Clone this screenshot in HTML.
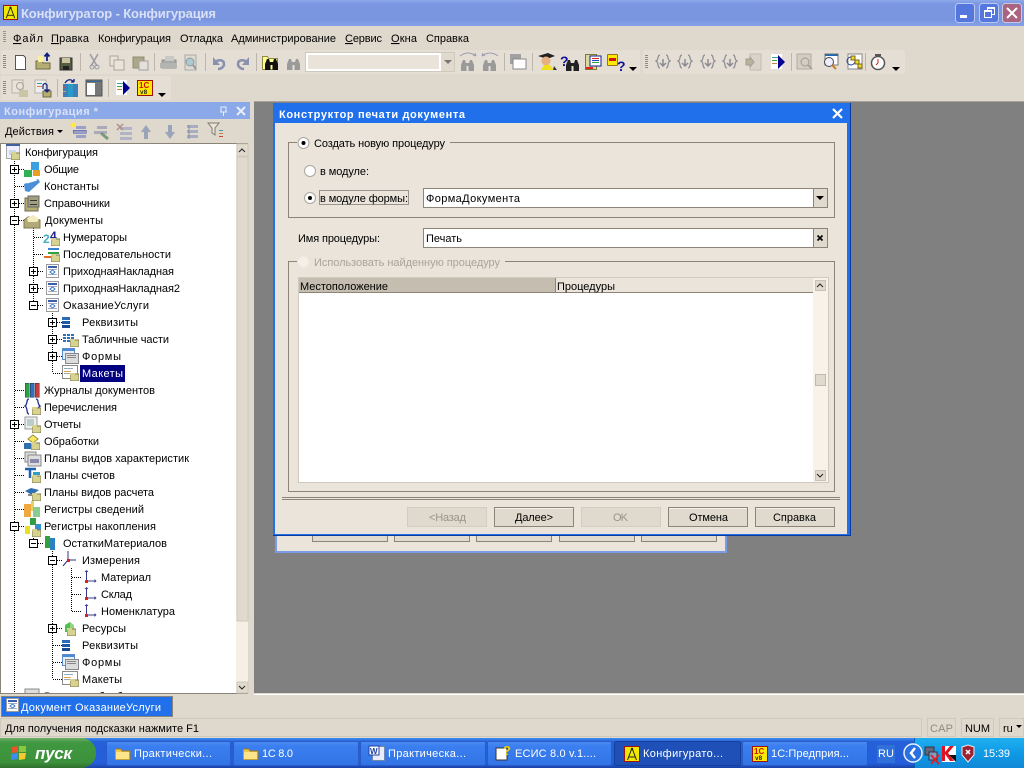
<!DOCTYPE html>
<html lang="ru"><head><meta charset="utf-8"><title>Конфигуратор</title>
<style>
html,body{margin:0;padding:0;background:#dfd8cd;overflow:hidden}
svg{display:block}
text{font:11px "Liberation Sans",sans-serif;fill:#000;shape-rendering:auto}
.w text,text.w{fill:#fff}
.g{fill:#aaa498}
.b{font-weight:bold}
rect,line,path.c{shape-rendering:crispEdges}
.d{stroke:#000;stroke-width:1;stroke-dasharray:1 1;fill:none}
</style></head><body>
<svg width="1024" height="768" viewBox="0 0 1024 768" xmlns="http://www.w3.org/2000/svg">
<defs>
<linearGradient id="tb" x1="0" y1="0" x2="0" y2="1"><stop offset="0" stop-color="#8da9ea"/><stop offset=".15" stop-color="#7c97e2"/><stop offset=".75" stop-color="#7a95e0"/><stop offset="1" stop-color="#84a2e8"/></linearGradient>
<linearGradient id="task" x1="0" y1="0" x2="0" y2="1"><stop offset="0" stop-color="#3f8cf0"/><stop offset=".12" stop-color="#2560d8"/><stop offset=".85" stop-color="#245edb"/><stop offset="1" stop-color="#1941a5"/></linearGradient>
<linearGradient id="start" x1="0" y1="0" x2="0" y2="1"><stop offset="0" stop-color="#6fae6b"/><stop offset=".15" stop-color="#3f983f"/><stop offset=".8" stop-color="#3c923c"/><stop offset="1" stop-color="#2e6f2e"/></linearGradient>
<linearGradient id="tbtn" x1="0" y1="0" x2="0" y2="1"><stop offset="0" stop-color="#4d8df2"/><stop offset=".2" stop-color="#3a7ef0"/><stop offset="1" stop-color="#3274e6"/></linearGradient>
<linearGradient id="tray" x1="0" y1="0" x2="0" y2="1"><stop offset="0" stop-color="#1fb0f0"/><stop offset=".5" stop-color="#0f9ae6"/><stop offset="1" stop-color="#1088d8"/></linearGradient>
<symbol id="fo" viewBox="0 0 9 8" width="9" height="8"><rect x="0" y="1" width="9" height="7" fill="#d8d290" stroke="#7f7a50"/><rect x="0" y="0" width="5" height="2" fill="#d8d290"/></symbol>
<symbol id="plus" viewBox="0 0 9 9" width="9" height="9"><rect x=".5" y=".5" width="8" height="8" fill="#fff" stroke="#000"/><rect x="2" y="4" width="5" height="1" fill="#000"/><rect x="4" y="2" width="1" height="5" fill="#000"/></symbol>
<symbol id="minus" viewBox="0 0 9 9" width="9" height="9"><rect x=".5" y=".5" width="8" height="8" fill="#fff" stroke="#000"/><rect x="2" y="4" width="5" height="1" fill="#000"/></symbol>
<symbol id="docic" viewBox="0 0 13 14" width="13" height="14"><rect x=".5" y=".5" width="12" height="13" fill="#fff" stroke="#9a9a9a"/><rect x="2" y="2" width="9" height="2" fill="#3a5fa8"/><rect x="2" y="5" width="9" height="1" fill="#aab"/><rect x="2" y="10" width="9" height="1" fill="#aab"/><path d="M6.500 6l2.500 2-2.500 2-2.500-2z" fill="#fff" stroke="#3a7ac8"/></symbol>
<symbol id="rek" viewBox="0 0 9 11" width="9" height="11"><rect x="0" y="0" width="8" height="3" fill="#2a6ab8"/><rect x="0" y="4" width="8" height="3" fill="#1f5aa8"/><rect x="0" y="8" width="8" height="3" fill="#174a90"/></symbol>
<symbol id="form" viewBox="0 0 17 16" width="17" height="16"><rect x=".5" y=".5" width="12" height="11" fill="#e8eef8" stroke="#5a8ac8"/><rect x="1" y="1" width="11" height="2" fill="#4a8ad8"/><rect x="3.500" y="5.500" width="13" height="10" fill="#dcdcdc" stroke="#888"/><rect x="5" y="7" width="9" height="1" fill="#888"/><rect x="5" y="9" width="9" height="1" fill="#888"/></symbol>
<symbol id="maket" viewBox="0 0 17 16" width="17" height="16"><rect x=".5" y=".5" width="15" height="13" fill="#fff" stroke="#8a8a8a"/><rect x="2" y="3" width="9" height="1" fill="#9ab"/><rect x="2" y="6" width="7" height="1" fill="#e0a050"/><rect x="2" y="8" width="7" height="1" fill="#9ab"/><use href="#fo" x="8" y="8"/></symbol>
<symbol id="axis" viewBox="0 0 14 14" width="14" height="14"><path d="M3.500 1v10M3.500 11h9" stroke="#3a3a90" fill="none"/><rect x="2" y="10" width="3" height="3" fill="#e02020"/><path d="M3.500 0l-2 2h4zM13.500 11l-2-2v4z" fill="#3a3a90"/></symbol>
<symbol id="bino" viewBox="0 0 13 12" width="13" height="12"><path d="M0 12V6l2-5h2l1.500 5v6zM13 12V6l-2-5H9L7.500 6v6z" fill="currentColor"/><rect x="5" y="4" width="3" height="3" fill="currentColor"/></symbol>
<symbol id="logo1c" viewBox="0 0 16 16" width="16" height="16"><rect x=".5" y=".5" width="15" height="15" fill="#ffe800" stroke="#a01010"/><text x="2" y="8" style="font:bold 8px 'Liberation Sans',sans-serif;fill:#d01010">1C</text><text x="3" y="14" style="font:bold 6px 'Liberation Mono',monospace;fill:#222">v8</text></symbol>
<symbol id="cfg" viewBox="0 0 16 16" width="16" height="16"><rect x=".5" y=".5" width="15" height="15" fill="#f0e800" stroke="#a01010"/><path d="M8 2L3.500 14M8 2l4.500 12M5 11h6" stroke="#222" fill="none"/><circle cx="8" cy="3" r="1.200" fill="#222"/></symbol>
<symbol id="yf" viewBox="0 0 16 13" width="16" height="13"><path d="M0 2h6l1 2h8v9H0z" fill="#f0c850" stroke="#a07820"/><rect x="1" y="5" width="13" height="7" fill="#fce48a"/></symbol>
<symbol id="brace" viewBox="0 0 16 16" width="16" height="16"><path d="M5 1C2 1 4 6 1 7c3 1 1 7 4 7M11 1c3 0 1 5 4 6-3 1-1 7-4 7" fill="none" stroke="#8a8a92" stroke-width="1.200"/><path d="M8 5v6M5 9l3 3 3-3" fill="none" stroke="#8a8a92" stroke-width="1.500"/></symbol>
<symbol id="btn" viewBox="0 0 80 20" width="80" height="20"><rect x=".5" y=".5" width="79" height="19" fill="#e0dace" stroke="#8c8476"/><rect x="1" y="1" width="78" height="1" fill="#f4f0ea"/></symbol>
<symbol id="btnd" viewBox="0 0 80 20" width="80" height="20"><rect x=".5" y=".5" width="79" height="19" fill="#dfd9ce" stroke="#d3cdc1"/></symbol>
</defs>

<!-- app chrome -->
<rect width="1024" height="768" fill="#dfd8cd"/>
<rect width="1024" height="26" fill="url(#tb)"/>
<use href="#cfg" x="3" y="5" width="15" height="15"/>
<text x="21" y="18" class="b" style="font-size:13px;fill:#d9e0f5" textLength="195">Конфигуратор - Конфигурация</text>
<g>
<rect x="955.500" y="3.500" width="19" height="19" rx="3" fill="#5577dd" stroke="#b8c8f0"/><rect x="960" y="15" width="7" height="3" fill="#fff"/>
<rect x="979.500" y="3.500" width="19" height="19" rx="3" fill="#5577dd" stroke="#b8c8f0"/><path class="c" d="M984.500 10.500h7v7h-7zM987.500 10V7.500h7v7H992" fill="none" stroke="#fff"/><rect x="987" y="7" width="8" height="2" fill="#fff"/><rect x="984" y="10" width="8" height="2" fill="#fff"/>
<rect x="1002.500" y="3.500" width="19" height="19" rx="3" fill="#a86480" stroke="#c8c8e0"/><path d="M1007 8l10 10M1017 8l-10 10" stroke="#fff" stroke-width="2"/>
</g>

<!-- menu -->
<g fill="#9a958a"><rect x="3" y="31" width="3" height="1"/><rect x="3" y="33" width="3" height="1"/><rect x="3" y="35" width="3" height="1"/><rect x="3" y="37" width="3" height="1"/><rect x="3" y="39" width="3" height="1"/><rect x="3" y="41" width="3" height="1"/></g>
<text x="13" y="42" textLength="30"><tspan text-decoration="underline">Ф</tspan>айл</text>
<text x="51" y="42" textLength="38"><tspan text-decoration="underline">П</tspan>равка</text>
<text x="98" y="42" textLength="73">Конфигурация</text>
<text x="180" y="42" textLength="43">Отладка</text>
<text x="231" y="42" textLength="105">Администрирование</text>
<text x="345" y="42" textLength="37"><tspan text-decoration="underline">С</tspan>ервис</text>
<text x="391" y="42" textLength="26"><tspan text-decoration="underline">О</tspan>кна</text>
<text x="426" y="42" textLength="43">Справка</text>

<!-- toolbar bands -->
<rect x="1" y="50" width="639" height="24" rx="2" fill="#e4ded4"/>
<rect x="643" y="50" width="262" height="24" rx="2" fill="#e4ded4"/>
<rect x="1" y="76" width="170" height="24" rx="2" fill="#e4ded4"/>
<g fill="#8f8a80"><rect x="3" y="55" width="3" height="1"/><rect x="3" y="57" width="3" height="1"/><rect x="3" y="59" width="3" height="1"/><rect x="3" y="61" width="3" height="1"/><rect x="3" y="63" width="3" height="1"/><rect x="3" y="65" width="3" height="1"/><rect x="3" y="67" width="3" height="1"/>
<rect x="3" y="81" width="3" height="1"/><rect x="3" y="83" width="3" height="1"/><rect x="3" y="85" width="3" height="1"/><rect x="3" y="87" width="3" height="1"/><rect x="3" y="89" width="3" height="1"/><rect x="3" y="91" width="3" height="1"/><rect x="3" y="93" width="3" height="1"/>
<rect x="645" y="55" width="3" height="1"/><rect x="645" y="57" width="3" height="1"/><rect x="645" y="59" width="3" height="1"/><rect x="645" y="61" width="3" height="1"/><rect x="645" y="63" width="3" height="1"/><rect x="645" y="65" width="3" height="1"/><rect x="645" y="67" width="3" height="1"/></g>
<g fill="#bdb7ab"><rect x="80" y="53" width="1" height="18"/><rect x="154" y="53" width="1" height="18"/><rect x="205" y="53" width="1" height="18"/><rect x="256" y="53" width="1" height="18"/><rect x="504" y="53" width="1" height="18"/><rect x="532" y="53" width="1" height="18"/><rect x="791" y="53" width="1" height="18"/><rect x="865" y="53" width="1" height="18"/><rect x="57" y="79" width="1" height="18"/><rect x="108" y="79" width="1" height="18"/></g>

<!-- toolbar 1 icons -->
<path class="c" d="M15.500 55.500h8l2 2v12h-10z" fill="#fff" stroke="#555"/>
<path d="M36 61h6l1 2h7v6H36z" fill="#b5ad72" stroke="#6f6a40"/><path d="M38 56h5v6h-5z" fill="#f8f0a0"/><path d="M47 61v-7M44.500 56.500l2.500-3 2.500 3" stroke="#102080" stroke-width="1.800" fill="none"/>
<rect x="60" y="58" width="12" height="12" fill="#555b3f" stroke="#333"/><rect x="62" y="58" width="8" height="5" fill="#c8c4a0"/><rect x="63" y="66" width="6" height="4" fill="#222"/>
<path d="M90 54l7 12M98 54l-7 12" stroke="#9a9aa4" stroke-width="1.500"/><circle cx="92" cy="67" r="2" fill="none" stroke="#9a9aa4"/><circle cx="97" cy="67" r="2" fill="none" stroke="#9a9aa4"/>
<rect x="110" y="56" width="8" height="10" fill="#e8e4da" stroke="#aaa69c"/><rect x="114" y="60" width="10" height="10" fill="#e8e4da" stroke="#aaa69c"/>
<rect x="133" y="57" width="11" height="11" fill="#aaa888" stroke="#8f8d75"/><rect x="139" y="61" width="9" height="9" fill="#e4e0d8" stroke="#a0a0a0"/>
<rect x="162" y="60" width="14" height="8" fill="#a8a8a6" stroke="#909090"/><rect x="165" y="56" width="9" height="5" fill="#c8c8c4"/><rect x="160" y="63" width="16" height="5" fill="#b4b4b0"/>
<rect x="185" y="55" width="11" height="15" fill="#dfdbd2" stroke="#aaa"/><circle cx="190" cy="62" r="4" fill="#b0c8d0" stroke="#8f9ca0"/><path d="M193 65l3 4" stroke="#999" stroke-width="2"/>
<path d="M215 62c4-3 9-2 9 2 0 3-3 5-6 5" fill="none" stroke="#8a90b0" stroke-width="2.500"/><path d="M213 57v8h7z" fill="#8a90b0"/>
<path d="M247 62c-4-3-9-2-9 2 0 3 3 5 6 5" fill="none" stroke="#8a90b0" stroke-width="2.500"/><path d="M249 57v8h-7z" fill="#8a90b0"/>
<path class="c" d="M262.500 56.500h5l1 2h9v11h-15z" fill="#ffff90" stroke="#8f8a40"/><use href="#bino" x="265" y="58" style="color:#111"/>
<use href="#bino" x="287" y="58" style="color:#9a9a9a"/>
<rect x="305.500" y="52.500" width="149" height="19" fill="#e0dace" stroke="#d0cabd"/>
<rect x="306" y="53" width="135" height="18" fill="#fff"/><rect x="308" y="55" width="131" height="14" fill="#e9e3d9"/>
<path d="M444 60h8l-4 4z" fill="#777"/>
<use href="#bino" x="461" y="59" style="color:#9a9a9a"/><path d="M460 56q8-6 16 0M476 56l-3-1M476 56l-1-3" fill="none" stroke="#9a9ab0"/>
<use href="#bino" x="483" y="59" style="color:#9a9a9a"/><path d="M482 56q8-6 16 0M482 56l3-1M482 56l1-3" fill="none" stroke="#9a9ab0"/>
<rect x="510" y="54" width="11" height="10" fill="#a0a0a0"/><rect x="513" y="59" width="13" height="10" fill="#fff" stroke="#8a8a8a"/>
<path d="M538 56l10-3 7 3-8 3z" fill="#222"/><circle cx="546" cy="61" r="4.500" fill="#e8b080"/><path d="M541 70l3-5h6l4 5z" fill="#eee020"/><path d="M553 70l1-4 3 4z" fill="#333"/>
<text x="560" y="66" class="b" style="font-size:14px;fill:#10109a">?</text><use href="#bino" x="566" y="59" style="color:#222"/>
<rect x="585.500" y="54.500" width="11" height="15" fill="#d8d8a0" stroke="#7f7a30"/><rect x="590" y="56" width="11" height="10" fill="#fff" stroke="#102090"/><rect x="592" y="58" width="7" height="1" fill="#e02020"/><rect x="592" y="60" width="7" height="1" fill="#2040c0"/><rect x="592" y="62" width="7" height="1" fill="#20a040"/><rect x="586" y="67" width="7" height="2" fill="#e02020"/>
<rect x="607.500" y="54.500" width="10" height="11" rx="1" fill="#ffe800" stroke="#a07020"/><rect x="609" y="58" width="7" height="3" fill="#d01010"/><text x="617" y="71" class="b" style="font-size:14px;fill:#10109a">?</text>
<path d="M629 67h8l-4 4z" fill="#000"/>
<use href="#brace" x="655" y="54"/><use href="#brace" x="677" y="54"/><use href="#brace" x="700" y="54"/><use href="#brace" x="722" y="54"/>
<rect x="750" y="54" width="11" height="16" fill="#d8d4ca" stroke="#c2beb4"/><path d="M746 59h4v-2l4 5-4 5v-2h-4z" fill="#b8b49c" stroke="#a0a090"/>
<rect x="771" y="54" width="11" height="15" fill="#fff"/><rect x="772" y="57" width="6" height="1" fill="#40a0a0"/><rect x="772" y="60" width="5" height="1" fill="#40a040"/><rect x="772" y="63" width="5" height="1" fill="#d08040"/><path d="M778 55l7 7-7 7z" fill="#000090"/>
<rect x="797" y="54" width="14" height="15" fill="#d2cec4" stroke="#b0aca2"/><circle cx="805" cy="62" r="4" fill="none" stroke="#a09c92"/><path d="M808 65l4 4" stroke="#a09c92" stroke-width="1.500"/>
<rect x="825" y="54" width="13" height="11" fill="#fff" stroke="#777"/><rect x="825" y="54" width="13" height="2" fill="#2a6aa8"/><circle cx="829" cy="62" r="4.500" fill="#eef" stroke="#444"/><path d="M832 65l4 4" stroke="#c88030" stroke-width="2"/>
<rect x="848" y="54" width="14" height="15" fill="#fff" stroke="#888"/><circle cx="851" cy="61" r="4" fill="none" stroke="#2040a0"/><rect x="851" y="56" width="4" height="4" fill="#e8e020" stroke="#806020"/><rect x="855" y="60" width="4" height="4" fill="#e8e020" stroke="#806020"/><rect x="858" y="64" width="4" height="4" fill="#e8e020" stroke="#806020"/>
<circle cx="878" cy="63" r="6.500" fill="#fff" stroke="#555" stroke-width="1.500"/><rect x="875" y="54" width="6" height="2" fill="#555"/><path d="M878 63v-4M878 63l-2 2" stroke="#d02020"/>
<path d="M892 67h8l-4 4z" fill="#000"/>

<!-- toolbar 3 icons -->
<rect x="12" y="80" width="11" height="13" fill="#e8e4da" stroke="#b8b4aa"/><rect x="19" y="90" width="9" height="7" fill="#c9c5a6"/><circle cx="20" cy="86" r="3.500" fill="none" stroke="#a8a498"/>
<rect x="35" y="80" width="11" height="13" fill="#eee" stroke="#b8b4aa"/><rect x="37" y="83" width="5" height="1" fill="#40a0a0"/><rect x="37" y="86" width="5" height="1" fill="#e08040"/><path d="M43 91h8v6h-8z" fill="#b5ad72" stroke="#6f6a40"/><path d="M43 89v-4q2-3 4 0v5M45 90h4l-2 2z" fill="none" stroke="#102080" stroke-width="1.200"/>
<rect x="63" y="84" width="15" height="13" fill="#3f7fb8"/><rect x="68" y="84" width="5" height="13" fill="#2a9ac8"/><path d="M65 83q4-6 9-1M74 82l-3 0M74 82l0-3" fill="none" stroke="#102080" stroke-width="1.300"/><rect x="63" y="87" width="3" height="1" fill="#e04040"/><rect x="63" y="91" width="3" height="1" fill="#e0a040"/>
<rect x="86" y="80" width="16" height="16" fill="#777" stroke="#555"/><rect x="87" y="83" width="8" height="12" fill="#fff"/><rect x="87" y="81" width="14" height="1" fill="#2a6aa8"/>
<rect x="116" y="80" width="11" height="15" fill="#fff"/><rect x="117" y="83" width="6" height="1" fill="#40a0a0"/><rect x="117" y="86" width="5" height="1" fill="#40a040"/><rect x="117" y="89" width="5" height="1" fill="#d08040"/><path d="M123 81l7 7-7 7z" fill="#000090"/>
<use href="#logo1c" x="137" y="80"/>
<path d="M158 93h8l-4 4z" fill="#000"/>

<!-- left panel -->
<rect x="0" y="102" width="250" height="17" fill="#8ba8e8"/>
<text x="4" y="115" class="b" style="fill:#d8e2f8" textLength="94">Конфигурация *</text>
<path class="c" d="M221 107h5v5h-5zM223.500 112v4M220 112h7" fill="none" stroke="#e8eefc"/>
<path d="M237 107l8 8M245 107l-8 8" stroke="#e8eefc" stroke-width="2"/>
<text x="5" y="135" textLength="49">Действия</text><path d="M57 130h6l-3 3z" fill="#000"/>
<g>
<rect x="76" y="126" width="10" height="3" fill="#9aa0c8"/><rect x="73" y="130" width="13" height="3" fill="#9aa0c8" stroke="#4050a0" stroke-width=".5"/><rect x="76" y="135" width="10" height="3" fill="#9aa0c8"/><circle cx="73" cy="125" r="2.500" fill="#ffe840"/>
<rect x="97" y="126" width="10" height="3" fill="#aab"/><rect x="94" y="131" width="13" height="3" fill="#aab"/><path d="M101 133l7 6" stroke="#7a9a78" stroke-width="3"/>
<rect x="120" y="127" width="12" height="3" fill="#b0b4c6"/><rect x="120" y="132" width="12" height="3" fill="#b0b4c6"/><rect x="120" y="137" width="12" height="3" fill="#b0b4c6"/><path d="M117 124l6 6M123 124l-6 6" stroke="#b09088" stroke-width="1.500"/>
<path d="M141 132l5-7 5 7h-3v7h-4v-7z" fill="#9aa4b8"/>
<path d="M165 132l5 7 5-7h-3v-7h-4v7z" fill="#9aa4b8"/>
<rect x="187" y="125" width="11" height="3" fill="#a8acc0"/><rect x="187" y="130" width="11" height="3" fill="#a8acc0"/><rect x="187" y="135" width="11" height="3" fill="#a8acc0"/><path d="M189 125v14" stroke="#8a8ea0"/>
<path d="M208 123h11l-4 5v7l-3-2v-5z" fill="#e8e4da" stroke="#807a70"/><rect x="219" y="130" width="4" height="1" fill="#40a0a0"/><rect x="219" y="133" width="4" height="1" fill="#d08040"/><rect x="219" y="136" width="4" height="1" fill="#d04040"/>
</g>

<!-- tree -->
<rect x="0" y="143" width="248" height="551" fill="#8a8478"/>
<rect x="1" y="144" width="235" height="549" fill="#fff"/>
<rect x="236" y="144" width="12" height="549" fill="#f5efe5"/>
<rect x="237" y="144" width="11" height="12" fill="#e0dace" stroke="#cfc9bc"/><path d="M239 152l3-3 3 3" fill="none" stroke="#222"/>
<rect x="237" y="157" width="11" height="464" fill="#e0dace" stroke="#cfc9bc"/>
<rect x="237" y="682" width="11" height="11" fill="#e0dace" stroke="#cfc9bc"/><path d="M239 686l3 3 3-3" fill="none" stroke="#222"/>

<svg x="1" y="144" width="235" height="549" viewBox="1 144 235 549">
<line class="d" x1="14.500" y1="157" x2="14.500" y2="693"/>
<line class="d" x1="33.500" y1="228" x2="33.500" y2="305"/>
<line class="d" x1="52.500" y1="313" x2="52.500" y2="373"/>
<line class="d" x1="33.500" y1="534" x2="33.500" y2="543"/>
<line class="d" x1="52.500" y1="551" x2="52.500" y2="679"/>
<line class="d" x1="71.500" y1="568" x2="71.500" y2="611"/>
<path class="d c" d="M19 169.500h5M15 186.500h9M19 203.500h5M19 220.500h5M34 237.500h9M34 254.500h9M38 271.500h6M38 288.500h6M38 305.500h6M57 322.500h5M57 339.500h5M57 356.500h5M53 373.500h9M15 390.500h9M15 407.500h9M19 424.500h5M15 441.500h9M15 458.500h9M15 475.500h9M15 492.500h9M15 509.500h9M19 526.500h5M38 543.500h6M57 560.500h5M72 577.500h9M72 594.500h9M72 611.500h9M57 628.500h5M53 645.500h9M53 662.500h9M53 679.500h9M15 696.500h9"/>
<use href="#plus" x="10" y="165"/><use href="#plus" x="10" y="199"/><use href="#minus" x="10" y="216"/>
<use href="#plus" x="29" y="267"/><use href="#plus" x="29" y="284"/><use href="#minus" x="29" y="301"/>
<use href="#plus" x="48" y="318"/><use href="#plus" x="48" y="335"/><use href="#plus" x="48" y="352"/>
<use href="#plus" x="10" y="420"/><use href="#minus" x="10" y="522"/><use href="#minus" x="29" y="539"/><use href="#minus" x="48" y="556"/><use href="#plus" x="48" y="624"/>

<rect x="6.500" y="145.500" width="13" height="13" fill="#eef" stroke="#aaa"/><rect x="6" y="144" width="14" height="2" fill="#4060a0"/><rect x="9" y="150" width="7" height="5" fill="#c8d8e8"/><use href="#fo" x="11" y="152"/>
<rect x="31" y="162" width="8" height="8" fill="#3aa0e0"/><rect x="24" y="170" width="8" height="7" fill="#30b050"/><rect x="33" y="170" width="7" height="6" fill="#e8a020"/>
<path d="M24 184l14-5 2 3-11 10-4-1z" fill="#4a8fd8"/><path d="M27 183l10-3" stroke="#fff"/>
<rect x="25" y="198" width="13" height="13" fill="#b5ad72" stroke="#6f6a50"/><rect x="28" y="196" width="11" height="11" fill="#a0a080" stroke="#666"/><rect x="30" y="200" width="7" height="1" fill="#333"/><rect x="30" y="204" width="7" height="1" fill="#333"/>
<path d="M24 220l4-3h6l6 3v8H24z" fill="#b0aa78" stroke="#807a50"/><path d="M27 218l6-3 6 4-2 3H28z" fill="#f4ecc0"/>
<text x="43" y="243" class="b" style="font-size:12px;fill:#40b0c0">2</text><text x="50" y="240" class="b" style="font-size:12px;fill:#202090">4</text><use href="#fo" x="51" y="238"/>
<rect x="48" y="248" width="11" height="2" fill="#3a80d0"/><rect x="48" y="252" width="11" height="2" fill="#30a040"/><rect x="44" y="256" width="9" height="2" fill="#e07030"/><use href="#fo" x="51" y="254"/>
<use href="#docic" x="46" y="264"/><use href="#docic" x="46" y="281"/><use href="#docic" x="46" y="298"/>
<use href="#rek" x="62" y="317"/>
<rect x="63" y="334" width="13" height="10" fill="#fff"/><g fill="#2a70c0"><rect x="63" y="334" width="3" height="2"/><rect x="67" y="334" width="3" height="2"/><rect x="71" y="334" width="3" height="2"/><rect x="63" y="337" width="3" height="2"/><rect x="67" y="337" width="3" height="2"/><rect x="71" y="337" width="3" height="2"/><rect x="63" y="340" width="3" height="2"/><rect x="67" y="340" width="3" height="2"/></g><use href="#fo" x="70" y="339"/>
<use href="#form" x="62" y="348"/><use href="#maket" x="62" y="365"/>
<rect x="80" y="365" width="45" height="17" fill="#000080"/>
<!-- journals -->
<rect x="25" y="383" width="4" height="14" fill="#30a040" stroke="#205030" stroke-width=".5"/><rect x="30" y="383" width="4" height="14" fill="#3070c0" stroke="#203060" stroke-width=".5"/><rect x="35" y="383" width="4" height="14" fill="#c04040" stroke="#602020" stroke-width=".5"/>
<!-- enumerations brace -->
<path d="M29 399c-3 0-1 5-4 7 3 1 1 8 4 8M36 399c3 0 1 5 4 7-3 1-1 8-4 8" fill="none" stroke="#203090" stroke-width="1.300"/><use href="#fo" x="32" y="407"/>
<rect x="25" y="417" width="12" height="12" fill="#eee" stroke="#999"/><rect x="27" y="419" width="7" height="7" fill="#bcc"/><use href="#fo" x="32" y="425"/>
<path d="M33 435l5 4-5 4-5-4z" fill="#ffe860" stroke="#909040"/><rect x="24" y="443" width="9" height="6" fill="#3070b0"/><use href="#fo" x="31" y="442"/>
<rect x="25" y="452" width="11" height="10" fill="#ddd" stroke="#888"/><rect x="28" y="455" width="13" height="11" fill="#ddd" stroke="#888"/><rect x="30" y="459" width="9" height="4" fill="#88a"/>
<path d="M25 469h11M30 469v9" stroke="#2060b0" stroke-width="2.500"/><use href="#fo" x="32" y="475"/><rect x="33" y="472" width="7" height="3" fill="#30a0c0"/>
<path d="M25 491l6-3 8 2-7 5z" fill="#3070b0"/><rect x="28" y="494" width="8" height="2" fill="#888"/><use href="#fo" x="32" y="493"/>
<rect x="24" y="504" width="7" height="13" fill="#f0a840"/><rect x="31" y="501" width="3" height="10" fill="#e8d060"/><rect x="33" y="507" width="7" height="10" fill="#8acb90"/>
<rect x="25" y="526" width="5" height="8" fill="#e8e020"/><rect x="30" y="518" width="6" height="7" fill="#30a040"/><rect x="35" y="524" width="6" height="6" fill="#3090d0"/><use href="#fo" x="32" y="529"/>
<rect x="45" y="536" width="5" height="12" fill="#30a040"/><rect x="50" y="538" width="5" height="12" fill="#2a80c0"/>
<g transform="translate(62,551)"><path d="M6 0v9M6 9h8M6 9l-5 6" stroke="#303080" fill="none"/><rect x="5" y="8" width="3" height="3" fill="#e02020"/></g>
<use href="#axis" x="83" y="570"/><use href="#axis" x="83" y="587"/><use href="#axis" x="83" y="604"/>
<path d="M65 625l5-3v10h-5z" fill="#50c050"/><path d="M70 622l4 3v7h-4z" fill="#90d880"/><use href="#fo" x="67" y="628"/>
<use href="#rek" x="62" y="640"/><use href="#form" x="62" y="654"/><use href="#maket" x="62" y="671"/>
<rect x="25" y="689" width="14" height="10" fill="#ddd" stroke="#888"/>

<text x="25" y="156" textLength="73">Конфигурация</text>
<text x="44" y="173" textLength="35">Общие</text>
<text x="44" y="190" textLength="55">Константы</text>
<text x="44" y="207" textLength="66">Справочники</text>
<text x="45" y="224" textLength="58">Документы</text>
<text x="63" y="241" textLength="64">Нумераторы</text>
<text x="63" y="258" textLength="108">Последовательности</text>
<text x="63" y="275" textLength="111">ПриходнаяНакладная</text>
<text x="63" y="292" textLength="117">ПриходнаяНакладная2</text>
<text x="63" y="309" textLength="86">ОказаниеУслуги</text>
<text x="82" y="326" textLength="56">Реквизиты</text>
<text x="82" y="343" textLength="87">Табличные части</text>
<text x="82" y="360" textLength="39">Формы</text>
<text x="82" y="377" textLength="41" style="fill:#fff">Макеты</text>
<text x="44" y="394" textLength="111">Журналы документов</text>
<text x="44" y="411" textLength="73">Перечисления</text>
<text x="44" y="428" textLength="37">Отчеты</text>
<text x="44" y="445" textLength="55">Обработки</text>
<text x="44" y="462" textLength="145">Планы видов характеристик</text>
<text x="44" y="479" textLength="71">Планы счетов</text>
<text x="44" y="496" textLength="110">Планы видов расчета</text>
<text x="44" y="513" textLength="100">Регистры сведений</text>
<text x="44" y="530" textLength="112">Регистры накопления</text>
<text x="63" y="547" textLength="104">ОстаткиМатериалов</text>
<text x="82" y="564" textLength="58">Измерения</text>
<text x="101" y="581" textLength="50">Материал</text>
<text x="101" y="598" textLength="31">Склад</text>
<text x="101" y="615" textLength="74">Номенклатура</text>
<text x="82" y="632" textLength="44">Ресурсы</text>
<text x="82" y="649" textLength="56">Реквизиты</text>
<text x="82" y="666" textLength="39">Формы</text>
<text x="82" y="683" textLength="40">Макеты</text>
<text x="44" y="700" textLength="100">Внешние обработки</text>
</svg>

<!-- MDI area -->
<rect x="254" y="101" width="770" height="592" fill="#808080"/>
<rect x="254" y="101" width="770" height="1" fill="#a8a49c"/>
<rect x="254" y="694" width="770" height="1" fill="#fff"/>
<rect x="275" y="530" width="452" height="23" fill="#7b9be8"/>
<rect x="277" y="530" width="448" height="21" fill="#eae4da"/>
<g fill="#e0dace" stroke="#8c8476"><rect x="312.500" y="525.500" width="75" height="16"/><rect x="394.500" y="525.500" width="75" height="16"/><rect x="476.500" y="525.500" width="75" height="16"/><rect x="559.500" y="525.500" width="75" height="16"/><rect x="641.500" y="525.500" width="75" height="16"/></g>

<!-- dialog -->
<rect x="273" y="103" width="578" height="433" fill="#0a3a9a"/>
<rect x="273" y="103" width="577" height="432" fill="#1f70ea"/>
<rect x="275" y="123" width="572" height="411" fill="#eae4da"/>
<text x="279" y="118" class="b w" textLength="186">Конструктор печати документа</text>
<path d="M833 109l9 9M842 109l-9 9" stroke="#fff" stroke-width="2.200"/>

<rect x="288.500" y="142.500" width="546" height="75" fill="none" stroke="#8c8476"/>
<rect x="297" y="140" width="153" height="6" fill="#eae4da"/>
<circle cx="303.500" cy="143" r="5.500" fill="#fff" stroke="#aaa69c"/><circle cx="303.500" cy="143" r="2" fill="#000"/>
<text x="314" y="147" textLength="131">Создать новую процедуру</text>
<circle cx="310" cy="171" r="5.500" fill="#fff" stroke="#aaa69c"/>
<text x="320" y="175" textLength="49">в модуле:</text>
<circle cx="310" cy="198" r="5.500" fill="#fff" stroke="#aaa69c"/><circle cx="310" cy="198" r="2" fill="#000"/>
<rect x="319.500" y="190.500" width="89" height="14" fill="none" stroke="#444" stroke-dasharray="1 1"/>
<text x="320" y="202" textLength="88">в модуле формы:</text>
<rect x="423.500" y="188.500" width="404" height="19" fill="#fff" stroke="#8c8476"/>
<rect x="813" y="189" width="14" height="18" fill="#e0dace"/><rect x="813" y="188" width="1" height="20" fill="#8c8476"/>
<path d="M816 196h8l-4 4z" fill="#000"/>
<text x="426" y="202" textLength="94">ФормаДокумента</text>

<text x="298" y="242" textLength="82">Имя процедуры:</text>
<rect x="423.500" y="228.500" width="404" height="19" fill="#fff" stroke="#8c8476"/>
<rect x="813" y="229" width="14" height="18" fill="#e0dace"/><rect x="813" y="228" width="1" height="20" fill="#8c8476"/>
<path d="M817.500 235.500l5 5M822.500 235.500l-5 5" stroke="#000" stroke-width="1.600"/>
<text x="426" y="242" textLength="36">Печать</text>

<rect x="288.500" y="261.500" width="546" height="230" fill="none" stroke="#8c8476"/>
<rect x="297" y="258" width="208" height="6" fill="#eae4da"/>
<circle cx="303.500" cy="262" r="5.500" fill="#f4f0e8" stroke="#eee9e0"/>
<text x="314" y="266" class="g" textLength="186">Использовать найденную процедуру</text>
<rect x="298.500" y="277.500" width="530" height="205" fill="#fff" stroke="#d0cabe"/>
<rect x="299" y="278" width="256" height="14" fill="#c4bdb0"/>
<rect x="555" y="278" width="1" height="14" fill="#8c8476"/>
<rect x="556" y="278" width="257" height="14" fill="#eae4da"/>
<rect x="299" y="292" width="514" height="1" fill="#8c8476"/>
<text x="300" y="290" textLength="88">Местоположение</text>
<text x="557" y="290" textLength="58">Процедуры</text>
<rect x="813" y="278" width="15" height="204" fill="#f8f2e8"/>
<rect x="815.500" y="280.500" width="10" height="10" fill="#e0dace" stroke="#c8c2b6"/><path d="M817 287l3-3 3 3" fill="none" stroke="#222"/>
<rect x="815.500" y="374.500" width="10" height="11" fill="#e0dace" stroke="#c0baae"/>
<rect x="815.500" y="470.500" width="10" height="10" fill="#e0dace" stroke="#c8c2b6"/><path d="M817 474l3 3 3-3" fill="none" stroke="#222"/>

<rect x="282" y="497" width="558" height="1" fill="#8c8476"/><rect x="282" y="499" width="558" height="1" fill="#8c8476"/>
<use href="#btnd" x="407" y="507"/><use href="#btn" x="494" y="507"/><use href="#btnd" x="581" y="507"/><use href="#btn" x="668" y="507"/><use href="#btn" x="755" y="507"/>
<text x="429" y="521" class="g" textLength="37" style="fill:#99948a">&lt;Назад</text>
<text x="515" y="521" textLength="38">Далее&gt;</text>
<text x="613" y="521" style="fill:#99948a" textLength="15">OK</text>
<text x="689" y="521" textLength="39">Отмена</text>
<text x="773" y="521" textLength="43">Справка</text>

<!-- window tab -->
<rect x="1.500" y="696.500" width="171" height="20" fill="#1f70ea" stroke="#8a8478"/>
<use href="#docic" x="6" y="698"/>
<text x="21" y="711" style="fill:#fff" textLength="140">Документ ОказаниеУслуги</text>

<!-- status bar -->
<rect x="0.500" y="718.500" width="921" height="18" fill="#dfd8cd" stroke="#cfc9bc"/>
<text x="5" y="732" textLength="194">Для получения подсказки нажмите F1</text>
<rect x="927.500" y="718.500" width="28" height="18" fill="none" stroke="#cfc9bc"/><text x="930" y="732" style="fill:#8f8a80" textLength="23">CAP</text>
<rect x="961.500" y="718.500" width="32" height="18" fill="none" stroke="#cfc9bc"/><text x="965" y="732" textLength="25">NUM</text>
<rect x="999.500" y="718.500" width="24" height="18" fill="none" stroke="#cfc9bc"/><text x="1003" y="732">ru</text><path d="M1016 725h6l-3 3z" fill="#000"/>

<!-- taskbar -->
<rect x="0" y="738" width="1024" height="30" fill="url(#task)"/>
<path d="M0 738h84q12 4 12 15t-12 15H0z" fill="url(#start)"/>
<g transform="translate(11,745)"><path d="M1 2l6-1v6l-6 1z" fill="#e8562a"/><path d="M8 1l7 0v6l-7 0z" fill="#8cc63f"/><path d="M0 9l7-1v6l-7 1z" fill="#3f8cf0"/><path d="M8 8h7l-1 6-6 1z" fill="#f8c82c"/></g>
<text x="35" y="759" style="font:italic bold 17px 'Liberation Sans',sans-serif;fill:#fff" textLength="37">пуск</text>
<g fill="url(#tbtn)" stroke="#2a5cc8">
<rect x="106.500" y="741.500" width="124" height="24" rx="2"/>
<rect x="233.500" y="741.500" width="125" height="24" rx="2"/>
<rect x="360.500" y="741.500" width="125" height="24" rx="2"/>
<rect x="487.500" y="741.500" width="124" height="24" rx="2"/>
<rect x="742.500" y="741.500" width="125" height="24" rx="2"/>
</g>
<rect x="614.500" y="741.500" width="126" height="24" rx="2" fill="#1e50b8" stroke="#143f98"/>
<use href="#yf" x="115" y="747"/><use href="#yf" x="243" y="747"/>
<rect x="372.500" y="746.500" width="12" height="14" fill="#e8ecf8" stroke="#7088b0"/><rect x="369" y="746" width="10" height="9" fill="#fff" stroke="#2040a0"/><text x="370" y="754" class="b" style="font-size:8px;fill:#2040a0">W</text>
<rect x="496" y="748" width="11" height="12" fill="#fff" stroke="#333"/><text x="503" y="755" class="b" style="font-size:13px;fill:#f0d000">?</text>
<use href="#cfg" x="624" y="746"/><use href="#logo1c" x="752" y="746"/>
<text x="134" y="757" style="fill:#fff" textLength="78">Практически...</text>
<text x="262" y="757" style="fill:#fff" textLength="31">1С 8.0</text>
<text x="388" y="757" style="fill:#fff" textLength="78">Практическа...</text>
<text x="515" y="757" style="fill:#fff" textLength="81">ЕСИС 8.0 v.1....</text>
<text x="643" y="757" style="fill:#fff" textLength="80">Конфигурато...</text>
<text x="771" y="757" style="fill:#fff" textLength="78">1С:Предприя...</text>
<rect x="877" y="745" width="18" height="18" fill="#3070d8"/>
<text x="878" y="757" style="fill:#fff">RU</text>
<rect x="914" y="738" width="110" height="30" fill="url(#tray)"/>
<rect x="914" y="738" width="1" height="30" fill="#0a60b0"/>
<circle cx="913" cy="753" r="9" fill="#2a70e0" stroke="#e8f0ff" stroke-width="1.500"/><path d="M915 748l-4 5 4 5" fill="none" stroke="#fff" stroke-width="2.500"/>
<rect x="925" y="747" width="9" height="8" fill="#667" stroke="#334"/><rect x="929" y="752" width="8" height="8" fill="#8899c0" stroke="#334"/><path d="M931 755l8 9M939 755l-8 9" stroke="#e02020" stroke-width="1.800"/>
<rect x="942" y="746" width="14" height="16" fill="#fff"/><path d="M942 746h3v6l5-6h4l-6 7 6 8h-4l-5-7v7h-3z" fill="#e01020"/><path d="M949 755l7 7v-7z" fill="#111"/>
<path d="M962 747l6-2 6 2v8l-6 7-6-7z" fill="#a02030" stroke="#eee"/><path d="M966 750l4 4M970 750l-4 4" stroke="#fff" stroke-width="1.500"/>
<text x="983" y="757" style="fill:#fff" textLength="27">15:39</text>
</svg>
</body></html>
